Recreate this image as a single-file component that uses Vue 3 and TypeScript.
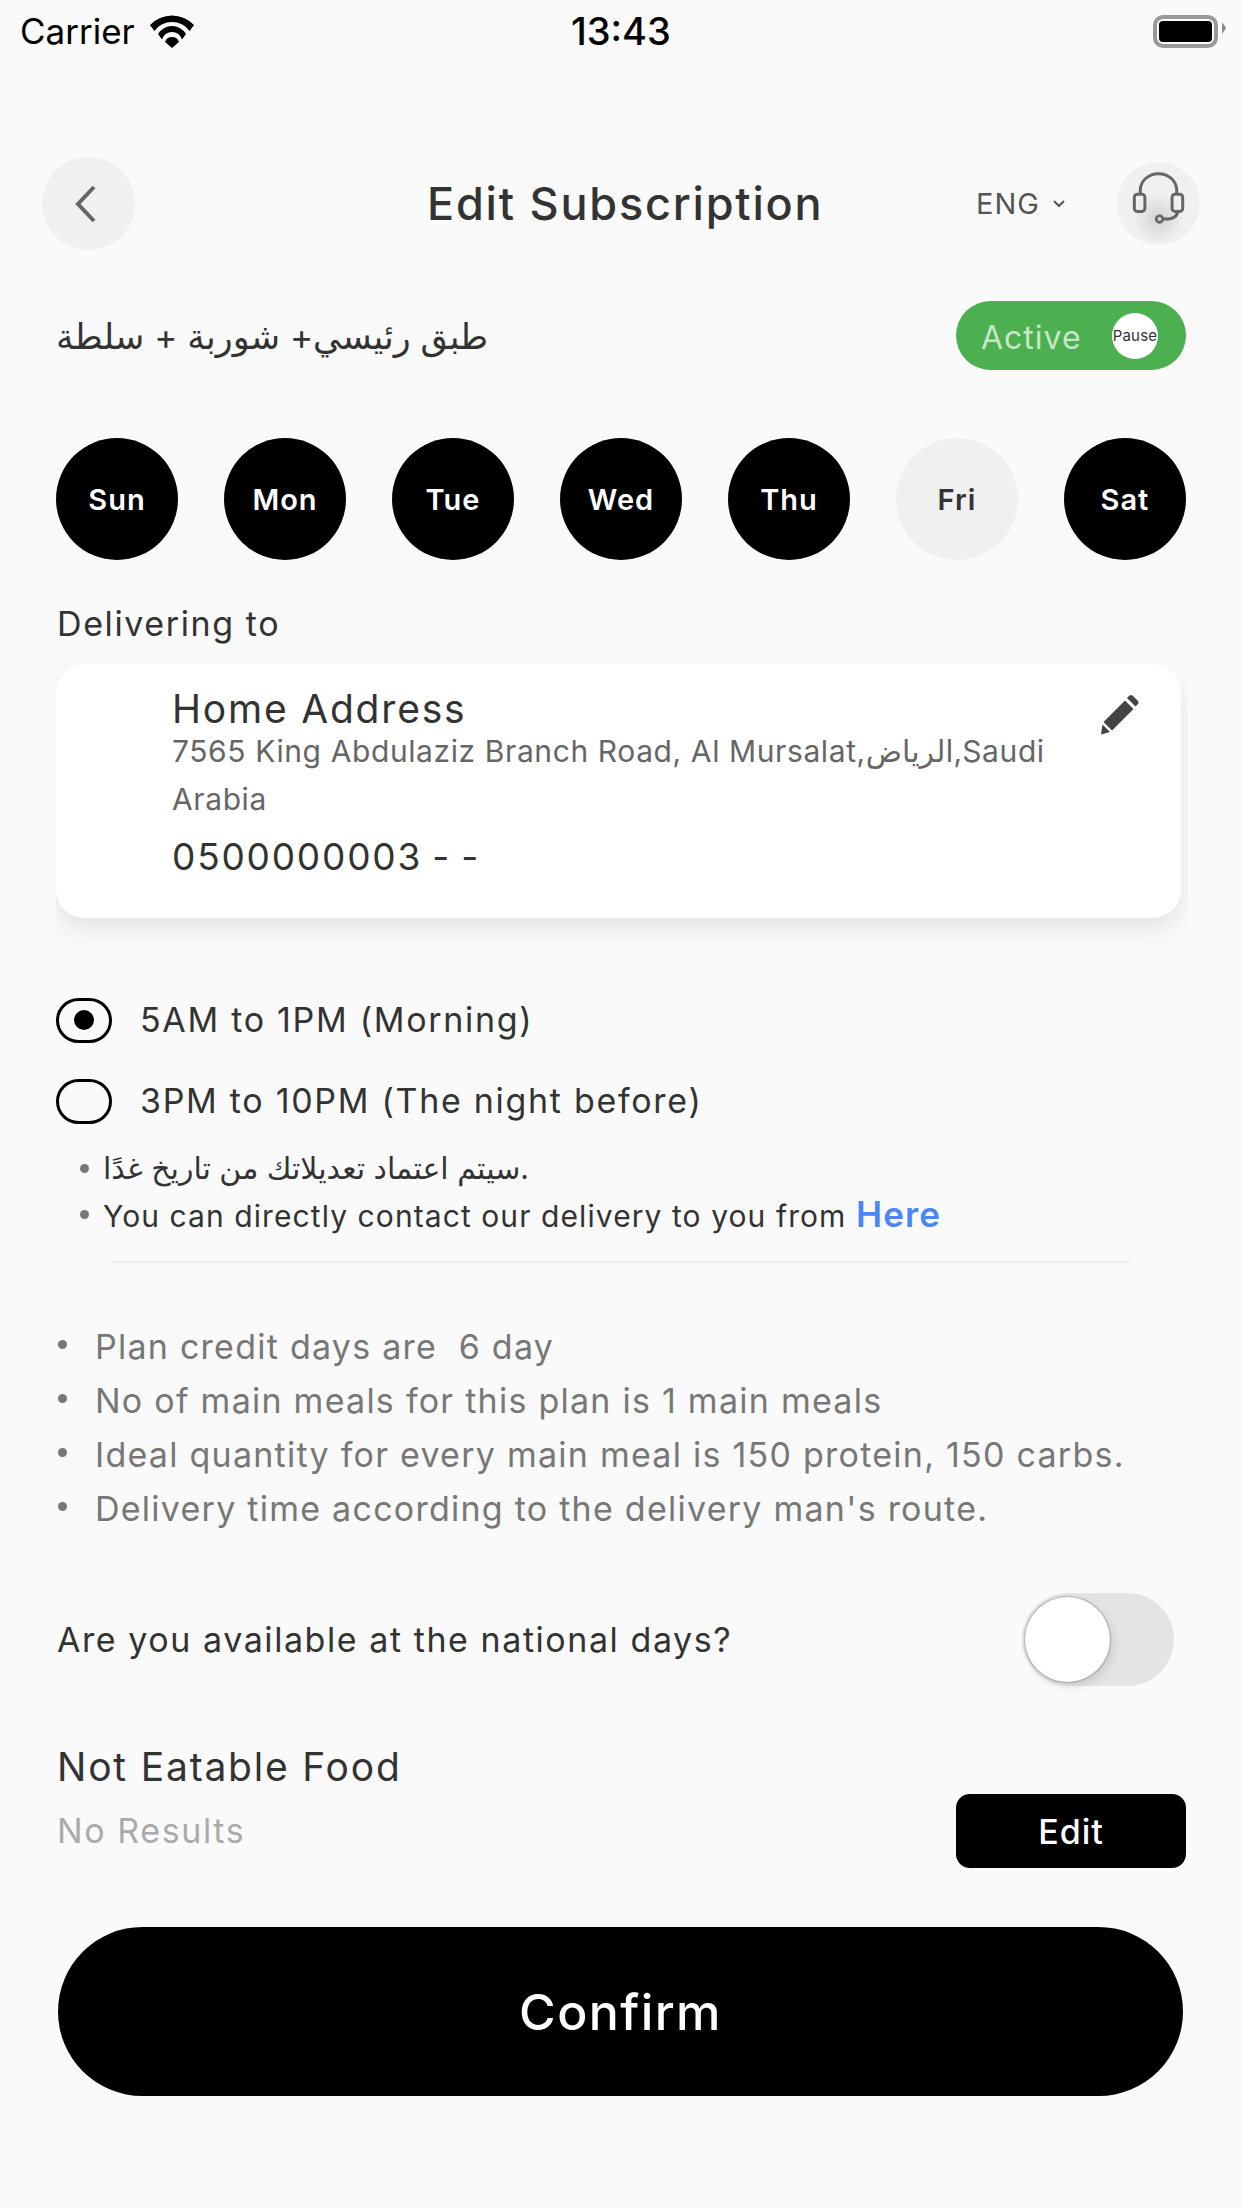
<script setup lang="ts">
interface Day {
  label: string
  on: boolean
}

const days: Day[] = [
  { label: 'Sun', on: true },
  { label: 'Mon', on: true },
  { label: 'Tue', on: true },
  { label: 'Wed', on: true },
  { label: 'Thu', on: true },
  { label: 'Fri', on: false },
  { label: 'Sat', on: true },
]

const notes = [
  'Plan credit days are  6 day',
  'No of main meals for this plan is 1 main meals',
  'Ideal quantity for every main meal is 150 protein, 150 carbs.',
  "Delivery time according to the delivery man's route.",
]
</script>

<template>
  <div class="page">
    <div class="status">
      <div class="status-left">
        <span class="carrier">Carrier</span>
        <svg class="wifi" viewBox="0 0 44 33" width="44" height="33">
          <path d="M0 10A30 30 0 0 1 44 10L39.500 16A21.500 21.500 0 0 0 4.500 16Z" fill="#000" />
          <path d="M8 19A16.250 16.250 0 0 1 36 19L32 24.500A10.400 10.400 0 0 0 12 24.500Z" fill="#000" />
          <path d="M15 27A7.400 7.400 0 0 1 29 27L22 33Z" fill="#000" />
        </svg>
      </div>
      <span class="clock">13:43</span>
      <div class="battery"><i></i></div>
    </div>

    <div class="header">
      <button class="back">
        <svg viewBox="0 0 24 40" width="24" height="40">
          <path d="M20 3 4 20l16 17" fill="none" stroke="#666" stroke-width="4" />
        </svg>
      </button>
      <h1 class="title">Edit Subscription</h1>
      <div class="lang">
        ENG
        <svg viewBox="0 0 14 10" width="14" height="10">
          <path d="M2 2l5 5 5-5" fill="none" stroke="#555" stroke-width="2" />
        </svg>
      </div>
      <div class="support">
        <svg viewBox="125 95 160 160" width="53" height="53">
          <path d="M150 160v-10a55 50 0 0 1 110 0v10" fill="none" stroke="#666" stroke-width="9" />
          <rect x="132" y="162" width="32" height="52" rx="9" fill="none" stroke="#666" stroke-width="9" />
          <rect x="246" y="162" width="32" height="52" rx="9" fill="none" stroke="#666" stroke-width="9" />
          <path d="M262 214c0 16-12 23-36 23h-8" fill="none" stroke="#666" stroke-width="9" />
          <circle cx="208" cy="237" r="10" fill="none" stroke="#666" stroke-width="8" />
        </svg>
      </div>
    </div>

    <div class="plan">
      <span class="plan-name">طبق رئيسي+ شوربة + سلطة</span>
      <div class="status-pill">
        <span>Active</span>
        <div class="pause">Pause</div>
      </div>
    </div>

    <div class="days">
      <div v-for="d in days" :key="d.label" :class="['day', { on: d.on }]">{{ d.label }}</div>
    </div>

    <div class="label">Delivering to</div>
    <div class="card-clip">
      <div class="card">
        <div class="card-name">Home Address</div>
        <div class="card-address">7565 King Abdulaziz Branch Road, Al Mursalat,الرياض,Saudi Arabia</div>
        <div class="card-phone">0500000003 - -</div>
        <svg class="pencil" viewBox="0 0 40 40" width="40" height="40">
          <path d="M27 3 29.500 .5Q31-.5 32.500 .5L38 6Q39 7.500 38 9L35.500 11.500Z" fill="#444" />
          <path d="M3.500 27 25 5.500 33.500 14 12 35.500Z" fill="#444" />
          <path d="M2.500 29.500 10 37 1 39.500Z" fill="#444" />
        </svg>
      </div>
    </div>

    <div class="slot">
      <div class="radio active"><i></i></div>
      <span>5AM to 1PM (Morning)</span>
    </div>
    <div class="slot second">
      <div class="radio"></div>
      <span>3PM to 10PM (The night before)</span>
    </div>

    <ul class="hints">
      <li class="arabic">سيتم اعتماد تعديلاتك من تاريخ غدًا.</li>
      <li class="direct">You can directly contact our delivery to you from <b>Here</b></li>
    </ul>
    <div class="divider"></div>

    <ul class="notes">
      <li v-for="n in notes" :key="n">{{ n }}</li>
    </ul>

    <div class="national">
      <span>Are you available at the national days?</span>
      <div class="switch"><i></i></div>
    </div>

    <div class="food">
      <div>
        <div class="food-title">Not Eatable Food</div>
        <div class="food-empty">No Results</div>
      </div>
      <button class="edit">Edit</button>
    </div>

    <button class="confirm">Confirm</button>
  </div>
</template>

<style>
html,
body {
  margin: 0;
  background: #fafafa;
}
</style>

<style scoped>
.page {
  width: 1242px;
  height: 2208px;
  overflow: hidden;
  background: #fafafa;
  font-family: Inter, "DejaVu Sans", sans-serif;
  color: #333;
  letter-spacing: 1px;
}

.status {
  height: 62px;
  padding: 0 16px 0 20px;
  display: flex;
  align-items: center;
  justify-content: space-between;
  position: relative;
  color: #000;
  letter-spacing: 0;
}

.status-left {
  display: flex;
  align-items: center;
  gap: 15px;
}

.carrier {
  font-size: 35px;
}

.clock {
  position: absolute;
  left: 571px;
  font-size: 38px;
  font-weight: 500;
}

.battery {
  width: 65px;
  height: 33px;
  margin-right: 8px;
  border: 4px solid #999;
  border-radius: 10px;
  padding: 2px;
  box-sizing: border-box;
  position: relative;
}

.battery i {
  display: block;
  height: 100%;
  background: #000;
  border-radius: 4px;
}

.battery::after {
  content: '';
  position: absolute;
  right: -12px;
  top: 3px;
  border-left: 4px solid #888;
  border-top: 6px solid transparent;
  border-bottom: 6px solid transparent;
}

.header {
  margin-top: 95px;
  height: 93px;
  padding: 0 42px;
  display: flex;
  align-items: center;
  position: relative;
}

.back {
  width: 93px;
  height: 93px;
  border: 0;
  border-radius: 50%;
  background: #f0f0f0;
  display: flex;
  align-items: center;
  justify-content: center;
  padding: 0 6px 0 0;
}

.title {
  position: absolute;
  left: 427px;
  margin: 0;
  font-size: 45px;
  font-weight: 500;
  letter-spacing: 1.800px;
}

.lang {
  margin-left: auto;
  display: flex;
  align-items: center;
  gap: 12px;
  font-size: 29px;
  color: #555;
}

.support {
  margin-left: 51px;
  width: 83px;
  height: 83px;
  padding-bottom: 10px;
  box-sizing: border-box;
  border-radius: 50%;
  background: radial-gradient(circle at 50% 68%, rgba(0, 0, 0, 0.13), rgba(0, 0, 0, 0) 36%), #f0f0f0;
  display: flex;
  align-items: center;
  justify-content: center;
}

.plan {
  margin-top: 51px;
  padding: 0 56px;
  display: flex;
  align-items: center;
  justify-content: space-between;
}

.plan-name {
  font-size: 35px;
  letter-spacing: 0;
}

.status-pill {
  width: 230px;
  height: 69px;
  border-radius: 35px;
  background: #4caf50;
  display: flex;
  align-items: center;
  justify-content: space-between;
  padding: 0 28px 0 25px;
  box-sizing: border-box;
  color: #c8e6c9;
  font-size: 32px;
}

.status-pill span {
  margin-top: 3px;
}

.pause {
  width: 46px;
  height: 46px;
  border-radius: 50%;
  background: #fff;
  color: #333;
  font-size: 15px;
  letter-spacing: 0.200px;
  display: flex;
  align-items: center;
  justify-content: center;
}

.days {
  margin-top: 68px;
  padding: 0 56px;
  display: flex;
  justify-content: space-between;
}

.day {
  width: 122px;
  height: 122px;
  border-radius: 50%;
  background: #f0f0f0;
  color: #333;
  font-size: 29px;
  font-weight: 600;
  display: flex;
  align-items: center;
  justify-content: center;
}

.day.on {
  background: #000;
  color: #fff;
}

.label {
  margin: 44px 0 0 57px;
  font-size: 34px;
  line-height: 40px;
  letter-spacing: 1.600px;
}

.card-clip {
  margin: 20px 54px 0 56px;
  height: 290px;
  overflow: hidden;
}

.card {
  width: 1125px;
  height: 254px;
  box-sizing: border-box;
  padding: 26px 110px 0 116px;
  background: #fff;
  border-radius: 28px;
  box-shadow: 0 12px 24px rgba(0, 0, 0, 0.09);
  position: relative;
}

.card-name {
  font-size: 39px;
  line-height: 37px;
  letter-spacing: 1.800px;
}

.card-address {
  font-size: 30px;
  line-height: 48px;
  letter-spacing: 0.600px;
  color: #666;
}

.card-phone {
  margin-top: 11px;
  font-size: 37px;
  line-height: 46px;
  letter-spacing: 1.800px;
  word-spacing: -2px;
}

.pencil {
  position: absolute;
  right: 41px;
  top: 31px;
}

.slot {
  margin: 43px 0 0 56px;
  display: flex;
  align-items: center;
  gap: 28px;
  font-size: 34px;
  line-height: 46px;
  letter-spacing: 1.700px;
}

.slot.second {
  margin-top: 35px;
}

.radio {
  width: 56px;
  height: 45px;
  border: 3px solid #000;
  border-radius: 23px;
  box-sizing: border-box;
  display: flex;
  align-items: center;
  justify-content: center;
}

.radio i {
  width: 20px;
  height: 20px;
  border-radius: 50%;
  background: #000;
}

.hints {
  list-style: none;
  margin: 20px 0 0;
  padding: 0 0 0 80px;
  font-size: 30px;
  line-height: 48px;
  letter-spacing: 1.080px;
}

.hints li {
  position: relative;
  padding-left: 23px;
}

.hints .arabic {
  font-size: 30px;
  letter-spacing: 0;
}

.hints .direct {
  margin-top: -2px;
}

.hints li::before,
.notes li::before {
  content: '';
  position: absolute;
  left: 0;
  top: 20px;
  width: 9px;
  height: 9px;
  border-radius: 50%;
  background: #777;
}

.hints b {
  color: #4a86f7;
  font-weight: 600;
  font-size: 35px;
}

.divider {
  margin: 21px 112px 0;
  height: 2px;
  background: #eee;
}

.notes {
  list-style: none;
  margin: 57px 0 0;
  padding: 0 0 0 58px;
  font-size: 34px;
  line-height: 54px;
  letter-spacing: 1.250px;
  color: #777;
}

.notes li {
  position: relative;
  padding-left: 37px;
  white-space: pre-wrap;
}

.national {
  margin-top: 57px;
  padding: 0 68px 0 57px;
  display: flex;
  align-items: center;
  justify-content: space-between;
  font-size: 34px;
  letter-spacing: 1.560px;
}

.switch {
  width: 152px;
  height: 93px;
  border-radius: 47px;
  background: #e4e4e4;
  position: relative;
}

.switch i {
  position: absolute;
  left: 3px;
  top: 4px;
  width: 85px;
  height: 85px;
  border-radius: 50%;
  background: #fff;
  box-shadow: 0 0 1px 1px rgba(0, 0, 0, 0.2), 3px 4px 10px rgba(0, 0, 0, 0.12);
}

.food {
  margin-top: 56px;
  padding: 0 56px 0 57px;
  display: flex;
  justify-content: space-between;
  align-items: flex-end;
}

.food-title {
  font-size: 39px;
  line-height: 50px;
  letter-spacing: 1.800px;
}

.food-empty {
  margin-top: 16px;
  font-size: 34px;
  line-height: 46px;
  letter-spacing: 1.600px;
  color: #aaa;
}

.edit {
  width: 230px;
  height: 74px;
  margin-bottom: -14px;
  border: 0;
  border-radius: 14px;
  background: #000;
  color: #fff;
  font-family: inherit;
  font-size: 34px;
  font-weight: 500;
  letter-spacing: 1px;
}

.confirm {
  display: block;
  margin: 73px 0 0 58px;
  width: 1125px;
  height: 169px;
  border: 0;
  border-radius: 85px;
  background: #000;
  color: #fff;
  font-family: inherit;
  font-size: 50px;
  font-weight: 500;
  letter-spacing: 1.400px;
}
</style>
